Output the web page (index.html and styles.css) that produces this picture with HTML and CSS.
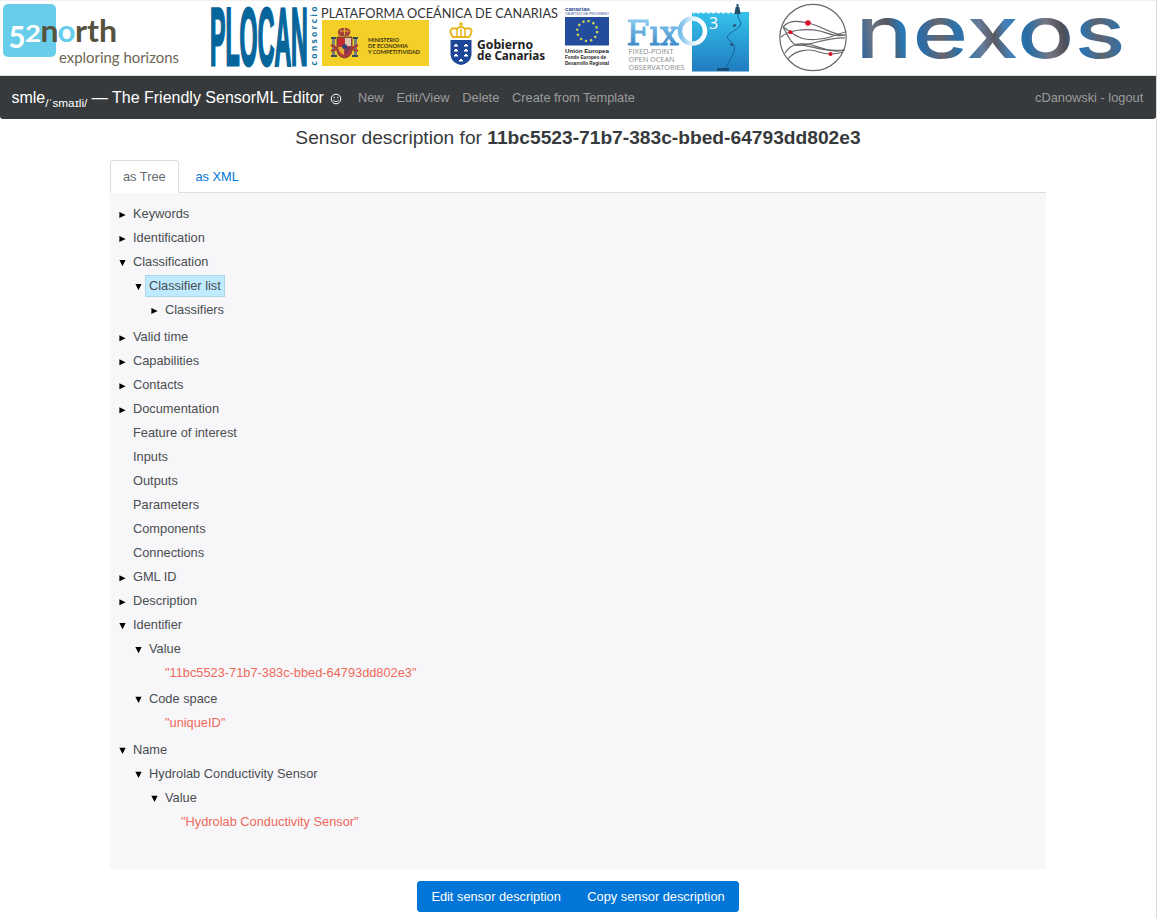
FILE: index.html
```html
<!DOCTYPE html>
<html lang="en">
<head>
<meta charset="utf-8">
<title>smle — The Friendly SensorML Editor</title>
<link rel="stylesheet" href="styles.css">
</head>
<body>
<div class="page">
<header class="logos">
  <svg class="logo" width="200" height="74" viewBox="0 1 200 74">
    <rect x="3" y="4" width="53" height="53" rx="5" fill="#68cdea"/>
    <g font-family="Lato" font-weight="700" font-size="30" fill="#56523e">
      <text x="8.500" y="48" fill="#fff" font-size="30" textLength="17" lengthAdjust="spacingAndGlyphs">5</text>
      <text x="25" y="42" fill="#fff" font-size="23" textLength="16" lengthAdjust="spacingAndGlyphs">2</text>
      <text x="40.500" y="42" textLength="18" lengthAdjust="spacingAndGlyphs">n</text>
      <text x="57.500" y="42" fill="#68cdea" textLength="18" lengthAdjust="spacingAndGlyphs">o</text>
      <text x="75" y="42" textLength="42" lengthAdjust="spacingAndGlyphs">rth</text>
    </g>
    <text x="59" y="63" font-family="Lato" font-size="16" fill="#6b6754" textLength="120" lengthAdjust="spacingAndGlyphs">exploring horizons</text>
  </svg>
  <svg class="logo" width="420" height="74" viewBox="200 1 420 74">
    <text class="plocan" transform="translate(210 65) scale(.302 1)" textLength="324" lengthAdjust="spacingAndGlyphs">PLOCAN</text>
    <text transform="translate(316.500 65.500) rotate(-90)" font-family="Open Sans" font-weight="700" font-size="8.500" fill="#1876a3" textLength="59">consorcio</text>
    <text x="321" y="17.500" font-family="Lato" font-size="14" fill="#333" textLength="237" lengthAdjust="spacingAndGlyphs">PLATAFORMA OCEÁNICA DE CANARIAS</text>
    <rect x="322" y="20" width="107" height="46" fill="#f3cf28"/>
    <g>
      <path d="M338 34c-1-6 4-6 6-6s8 0 6 6l-2 2h-8z" fill="#a4443b"/>
      <path d="M340 31h9M344.500 27v8" stroke="#e5b32b"/>
      <path d="M337 37h15v14q-1 6-7.500 7-6.500-1-7.500-7z" fill="#b53b3a" stroke="#6d4b36"/>
      <path d="M338 38h6v8h-6z" fill="#c52b31"/><path d="M345 38h6v8h-6z" fill="#ddc5b3"/>
      <path d="M338 47h6v8q-5-2-6-8" fill="#e4aa36"/><path d="M345 47h6q-1 6-6 8" fill="#7b3658"/>
      <circle cx="344.500" cy="46.500" r="2.500" fill="#344477"/>
      <path d="M333.500 37v19M355.500 37v19" stroke="#777d7c" stroke-width="3"/>
      <path d="M331 38h5M353 38h5M331 56h6M352 56h6" stroke="#374b59" stroke-width="2"/>
      <path d="M331 45l6 3M358 45l-6 3M331 51l6-2M358 51l-6-2" stroke="#ad382d" stroke-width="2"/>
    </g>
    <g font-family="Lato" font-weight="700" font-size="6" fill="#3c3310">
      <text x="368" y="42" textLength="31" lengthAdjust="spacingAndGlyphs">MINISTERIO</text>
      <text x="368" y="48" textLength="40" lengthAdjust="spacingAndGlyphs">DE ECONOMIA</text>
      <text x="368" y="54" textLength="52" lengthAdjust="spacingAndGlyphs">Y COMPETITIVIDAD</text>
    </g>
    <path d="M450.500 40h21v15q-1 8-10.500 10-9.500-2-10.500-10z" fill="#1d4796"/>
    <path d="M453 37c-6-8 0-10 4-8 2-3 6-3 8 0 4-2 10 0 4 8z" fill="#fff" stroke="#e8b51e" stroke-width="2"/>
    <path d="M453 37h16M461 22v6M459 24h4M457 30v6M465 30v6M461 29v7" stroke="#e8b51e" stroke-width="1.500"/>
    <path d="M454 46l2-2 2 2zM464 46l2-2 2 2zM454 51l2-2 2 2zM464 51l2-2 2 2zM454 56l2-2 2 2zM464 56l2-2 2 2zM459 61l2-2 2 2z" fill="#fff" stroke="#fff"/>
    <g font-family="Noto Sans" font-weight="700" font-size="11.500" fill="#222">
      <text x="477" y="48.500" textLength="56" lengthAdjust="spacingAndGlyphs">Gobierno</text>
      <text x="477" y="60" textLength="68" lengthAdjust="spacingAndGlyphs">de Canarias</text>
    </g>
    <g font-family="Liberation Sans" fill="#2b4c91">
      <text x="565" y="10.500" font-weight="700" font-size="5.500" textLength="25" lengthAdjust="spacingAndGlyphs">canarias</text>
      <text x="565" y="15" font-size="3.800" textLength="44" lengthAdjust="spacingAndGlyphs">OBJETIVO DE PROGRESO</text>
    </g>
    <rect x="565" y="17" width="44" height="28.500" fill="#244c9c"/>
    <circle cx="587.200" cy="31" r="10" fill="none" stroke="#d8dc54" stroke-width="2.200" stroke-dasharray="2.200 3.036"/>
    <g font-family="Liberation Sans" font-size="4.800" fill="#222">
      <text x="565" y="52.500" font-weight="700" font-size="5.500" textLength="44" lengthAdjust="spacingAndGlyphs">Unión Europea</text>
      <text x="565" y="59" font-weight="700" textLength="41" lengthAdjust="spacingAndGlyphs">Fondo Europeo de</text>
      <text x="565" y="65" font-weight="700" textLength="44" lengthAdjust="spacingAndGlyphs">Desarrollo Regional</text>
    </g>
  </svg>
  <svg class="logo" width="150" height="74" viewBox="620 1 150 74">
    <defs>
      <linearGradient id="sea" x2="0" y2="1"><stop stop-color="#35c2eb"/><stop offset="1" stop-color="#207cc0"/></linearGradient>
      <linearGradient id="fix" gradientUnits="userSpaceOnUse" x1="0" y1="18" x2="0" y2="46"><stop offset="0" stop-color="#8fd0f3"/><stop offset="1" stop-color="#3988c6"/></linearGradient>
      <linearGradient id="ring"><stop stop-color="#77bce9"/><stop offset=".5" stop-color="#e2f3fc"/><stop offset="1" stop-color="#fff"/></linearGradient>
    </defs>
    <path d="M692 12q2 3 4 0 2 3 5 0 2 3 5 0 2 3 5 0 2 3 5 0 2 3 5 0 2 3 5 0 2 3 5 0 2 3 5 0 2 3 5 0H749V71.500H692z" fill="url(#sea)"/>
    <g font-family="DejaVu Serif" fill="url(#fix)" stroke="url(#fix)" stroke-width="1">
      <text x="626.500" y="44.500" font-size="34" textLength="52" lengthAdjust="spacingAndGlyphs">Fıx</text>
    </g>
    <circle cx="692.500" cy="31" r="12.500" fill="none" stroke="url(#ring)" stroke-width="4.500"/>
    <text x="709" y="28.500" font-family="Open Sans" font-size="16" fill="#fff">3</text>
    <path d="M738 14c-1 6 6 8 1 13-7 6-16 8-9 14 9 6 3 13-5 28" fill="none" stroke="#176098"/>
    <path d="M737.500 4v5M735.500 13l1-5h2l1 5zM733 26l3-1M730 44l3 1" stroke="#25506d" stroke-width="2" fill="#25506d"/>
    <rect x="717" y="68" width="12" height="3" fill="#164f7a"/>
    <g font-family="Open Sans" font-size="8" fill="#8a8c8d">
      <text x="628.500" y="54" textLength="45" lengthAdjust="spacingAndGlyphs">FIXED-POINT</text>
      <text x="628.500" y="62" textLength="46" lengthAdjust="spacingAndGlyphs">OPEN OCEAN</text>
      <text x="628.500" y="70" textLength="56" lengthAdjust="spacingAndGlyphs">OBSERVATORIES</text>
    </g>
  </svg>
  <svg class="logo" width="380" height="74" viewBox="770 1 380 74">
    <defs>
      <linearGradient id="nexos" gradientUnits="userSpaceOnUse" x1="860" y1="58" x2="1123" y2="17">
        <stop stop-color="#26619c"/><stop offset=".06" stop-color="#6b7585"/><stop offset=".12" stop-color="#55565e"/><stop offset=".17" stop-color="#2878b6"/><stop offset=".24" stop-color="#2c6ca5"/><stop offset=".31" stop-color="#66656d"/><stop offset=".38" stop-color="#2871ae"/><stop offset=".46" stop-color="#667c9a"/><stop offset=".51" stop-color="#5b5961"/><stop offset=".56" stop-color="#4382bb"/><stop offset=".63" stop-color="#256da7"/><stop offset=".71" stop-color="#777783"/><stop offset=".77" stop-color="#4d4e57"/><stop offset=".83" stop-color="#2675b5"/><stop offset=".9" stop-color="#5e6470"/><stop offset="1" stop-color="#2875b5"/>
      </linearGradient>
    </defs>
    <g fill="none" stroke="#66666a" stroke-width="1.200">
      <circle cx="813" cy="37.500" r="33.200"/>
      <path d="M783 27c5-6 14-7 25-4 15 3 23 12 37 12"/>
      <path d="M781 37c8-7 24-9 39-6 10 3 17 6 25 4"/>
      <path d="M783 27c12 7 16 15 37 12 11-1 18-5 25-7"/>
      <path d="M783 27c5 8 7 16 13 18 12-2 22 8 49 5"/>
      <path d="M785 53c7-11 18-10 27-8 12 4 23 8 32 5"/>
      <path d="M788 59c7-9 21-11 31-7 9 3 18 2 24 0"/>
      <path d="M795 45c12 2 32-8 50-7"/>
    </g>
    <g fill="#d90e27"><circle cx="808" cy="23" r="2.800"/><circle cx="790.500" cy="32.300" r="2"/><circle cx="830.500" cy="54" r="2"/></g>
    <text x="855.500" y="57.500" font-family="Inter" font-weight="500" font-size="72" fill="url(#nexos)" textLength="270" lengthAdjust="spacingAndGlyphs">nexos</text>
  </svg>
</header>
<nav class="navbar">
  <a class="brand">smle<sub>/ˈsmaɪli/</sub> — The Friendly SensorML Editor
    <svg class="smile" width="12" height="12" viewBox="0 0 12 12"><circle cx="6" cy="6" r="4.800"/><path d="M3.200 7q2.800 3.200 5.600 0M4.300 3.800v1.400M7.700 3.800v1.400"/></svg></a>
  <a class="item">New</a><a class="item">Edit/View</a><a class="item">Delete</a><a class="item">Create from Template</a>
  <a class="item user">cDanowski - logout</a>
</nav>
<main class="container">
  <h1>Sensor description for <b>11bc5523-71b7-383c-bbed-64793dd802e3</b></h1>
  <div class="tabs"><a class="tab active">as Tree</a><a class="tab">as XML</a></div>
  <section class="panel">
    <ul class="tree">
      <li><div class="row closed">Keywords</div></li>
      <li><div class="row closed">Identification</div></li>
      <li><div class="row open">Classification</div>
        <ul>
          <li><div class="row open"><span class="selected">Classifier list</span></div>
            <ul><li><div class="row closed">Classifiers</div></li></ul>
          </li>
        </ul>
      </li>
      <li><div class="row closed">Valid time</div></li>
      <li><div class="row closed">Capabilities</div></li>
      <li><div class="row closed">Contacts</div></li>
      <li><div class="row closed">Documentation</div></li>
      <li><div class="row">Feature of interest</div></li>
      <li><div class="row">Inputs</div></li>
      <li><div class="row">Outputs</div></li>
      <li><div class="row">Parameters</div></li>
      <li><div class="row">Components</div></li>
      <li><div class="row">Connections</div></li>
      <li><div class="row closed">GML ID</div></li>
      <li><div class="row closed">Description</div></li>
      <li><div class="row open">Identifier</div>
        <ul>
          <li><div class="row open">Value</div>
            <ul><li><div class="row value">"11bc5523-71b7-383c-bbed-64793dd802e3"</div></li></ul>
          </li>
          <li><div class="row open">Code space</div>
            <ul><li><div class="row value">"uniqueID"</div></li></ul>
          </li>
        </ul>
      </li>
      <li><div class="row open">Name</div>
        <ul>
          <li><div class="row open">Hydrolab Conductivity Sensor</div>
            <ul>
              <li><div class="row open">Value</div>
                <ul><li><div class="row value">"Hydrolab Conductivity Sensor"</div></li></ul>
              </li>
            </ul>
          </li>
        </ul>
      </li>
    </ul>
  </section>
  <div class="actions"><button>Edit sensor description</button><button>Copy sensor description</button></div>
</main>
</div>
</body>
</html>
```

FILE: styles.css
```css
* { box-sizing: border-box; }
body { margin: 0; background: #fff; color: #4a4d50; font: 12.8px/24px "Liberation Sans", Arial, sans-serif; overflow: hidden; }
.page { height: 918px; border-top: 1px solid #f0f0f0; border-right: 1px solid #d9dadb; }
.logos { display: flex; height: 75px; border-bottom: 1px solid #dfe1e1; }
.logo { display: block; flex: none; overflow: visible; }
.plocan { font: 700 82px "Liberation Sans", sans-serif; fill: #06669b; stroke: #06669b; stroke-width: 2.2px; vector-effect: non-scaling-stroke; }
.navbar { display: flex; align-items: center; gap: 12.8px; height: 43px; padding: 0 12.8px 0 11.4px; background: #373a3c; border-radius: 0 0 3px 3px; }
.brand { color: #fff; font-size: 16px; white-space: nowrap; margin-right: 2.8px; }
.brand sub { font-size: 11.8px; line-height: 0; vertical-align: -4px; }
.smile { margin-left: 2px; vertical-align: -2.5px; fill: none; stroke: #fff; stroke-width: 1; }
.item { color: #9b9c9d; white-space: nowrap; }
.user { margin-left: auto; }
.container { width: 936px; margin-left: 110px; }
h1 { margin: 0; padding-top: 7px; height: 41px; font-size: 19.2px; font-weight: 400; text-align: center; color: #373a3c; line-height: 24px; }
.tabs { display: flex; gap: 3px; height: 33px; border-bottom: 1px solid #ddd; }
.tab { height: 33px; padding: 3px 12.8px 0 12px; border: 1px solid transparent; border-radius: 3px 3px 0 0; color: #0275d8; line-height: 25px; }
.tab.active { color: #666a6e; background: #fff; border-color: #ddd #ddd #fff; }
.panel { height: 676px; padding: 9px 7px 8px; background: #f7f7f9; }
.tree, .tree ul { list-style: none; margin: 0; padding: 0; }
.tree ul { padding: 0 0 1.6px 16px; }
.row { display: flex; align-items: center; height: 24px; padding-left: 2px; }
.row::before { content: ""; flex: none; width: 7px; height: 7px; margin: 2px 7px 0 0; }
.closed::before { background: #000; clip-path: polygon(5% 7%, 95% 50%, 5% 93%); }
.open::before { background: #000; clip-path: polygon(5% 5%, 95% 5%, 50% 95%); }
.selected { margin-left: -4px; padding: 0 3px; height: 22px; line-height: 20px; background: #beebff; border: 1px solid #a9d6e9; }
.value { color: #f0695a; }
.actions { display: flex; justify-content: center; padding-top: 12px; }
button { height: 31px; padding: 0 13px 1px; border: 1px solid #0275d8; background: #0275d8; color: #fff; font: 12.8px "Liberation Sans", Arial, sans-serif; }
button:first-child { border-radius: 3px 0 0 3px; }
button:last-child { border-radius: 0 3px 3px 0; margin-left: -1.5px; }
```
